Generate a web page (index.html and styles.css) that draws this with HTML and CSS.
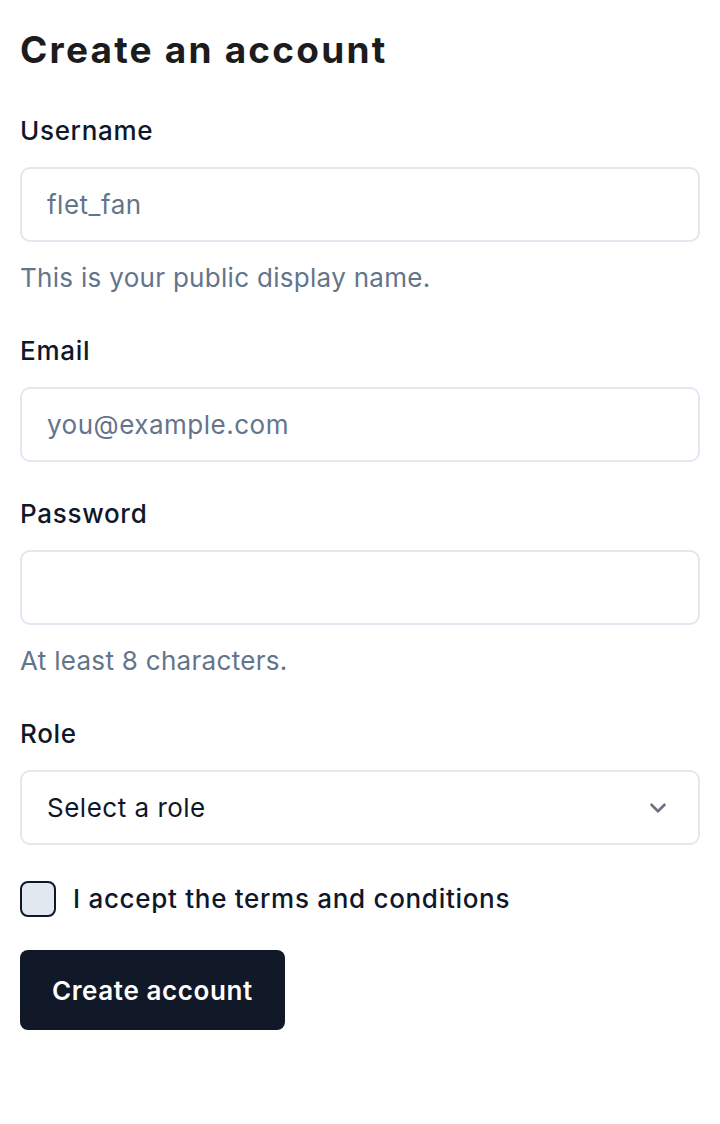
FILE: index.html
```html
<!DOCTYPE html>
<html lang="en">
<head>
    <meta charset="UTF-8">
    <meta name="viewport" content="width=device-width, initial-scale=1.0">
    <title>Create an account</title>
    <link rel="stylesheet" href="styles.css">
</head>
<body>
    <form class="signup">
        <h1 class="title">Create an account</h1>

        <div class="field">
            <label class="label" for="username">Username</label>
            <input class="input" id="username" type="text" placeholder="flet_fan">
            <div class="help">This is your public display name.</div>
        </div>

        <div class="field">
            <label class="label" for="email">Email</label>
            <input class="input" id="email" type="email" placeholder="you@example.com">
        </div>

        <div class="field">
            <label class="label" for="password">Password</label>
            <input class="input" id="password" type="password">
            <div class="help">At least 8 characters.</div>
        </div>

        <div class="field">
            <label class="label">Role</label>
            <div class="select">
                <span>Select a role</span>
                <svg class="chevron" viewBox="0 0 24 24" width="26" height="26" fill="none" stroke="currentColor" stroke-width="2.4" stroke-linecap="round" stroke-linejoin="round">
                    <path d="m6 9 6 6 6-6"/>
                </svg>
            </div>
        </div>

        <label class="check">
            <span class="box"></span>
            <span>I accept the terms and conditions</span>
        </label>

        <div>
            <button type="button" class="submit">Create account</button>
        </div>
    </form>
</body>
</html>
```

FILE: styles.css
```css
body {
    margin: 0;
    padding: 0;
    font-family: Inter, "Noto Sans", sans-serif;
    background-color: #ffffff;
    color: #0f172a;
}
.signup {
    display: flex;
    flex-direction: column;
    gap: 36px;
    padding: 21px 20px;
}
.title {
    margin: 0;
    font-size: 37px;
    font-weight: 700;
    line-height: 58px;
    color: #1c1c1e;
    letter-spacing: 2.2px;
}
.field {
    display: flex;
    flex-direction: column;
    gap: 20px;
}
.label {
    font-size: 26px;
    font-weight: 500;
    line-height: 32px;
    letter-spacing: 0.7px;
    color: #0f172a;
}
.input,
.select {
    box-sizing: border-box;
    width: 100%;
    height: 75px;
    padding: 0 25px;
    border: 2px solid #e2e8f0;
    border-radius: 10px;
    font-family: inherit;
    font-size: 26px;
    letter-spacing: 0.5px;
    color: #0f172a;
    background-color: #ffffff;
    outline: none;
}
.input::placeholder {
    color: #64748b;
}
.help {
    font-size: 26px;
    line-height: 32px;
    letter-spacing: 0.3px;
    color: #64748b;
    padding-bottom: 5px;
}
.select {
    display: flex;
    align-items: center;
    justify-content: space-between;
    padding-right: 27px;
}
.chevron {
    color: #6b7280;
}
.check {
    display: flex;
    align-items: center;
    gap: 17px;
    font-size: 26px;
    font-weight: 500;
    line-height: 36px;
    letter-spacing: 0.7px;
    color: #0f172a;
}
.box {
    box-sizing: border-box;
    width: 36px;
    height: 36px;
    border: 2px solid #0f172a;
    border-radius: 8px;
    background-color: #e2e8f0;
}
.submit {
    margin-top: -3px;
    height: 80px;
    padding: 0 32px;
    border: none;
    border-radius: 8px;
    background-color: #111827;
    color: #ffffff;
    font-family: inherit;
    font-size: 26px;
    font-weight: 600;
    letter-spacing: 0.6px;
    cursor: pointer;
}
```
